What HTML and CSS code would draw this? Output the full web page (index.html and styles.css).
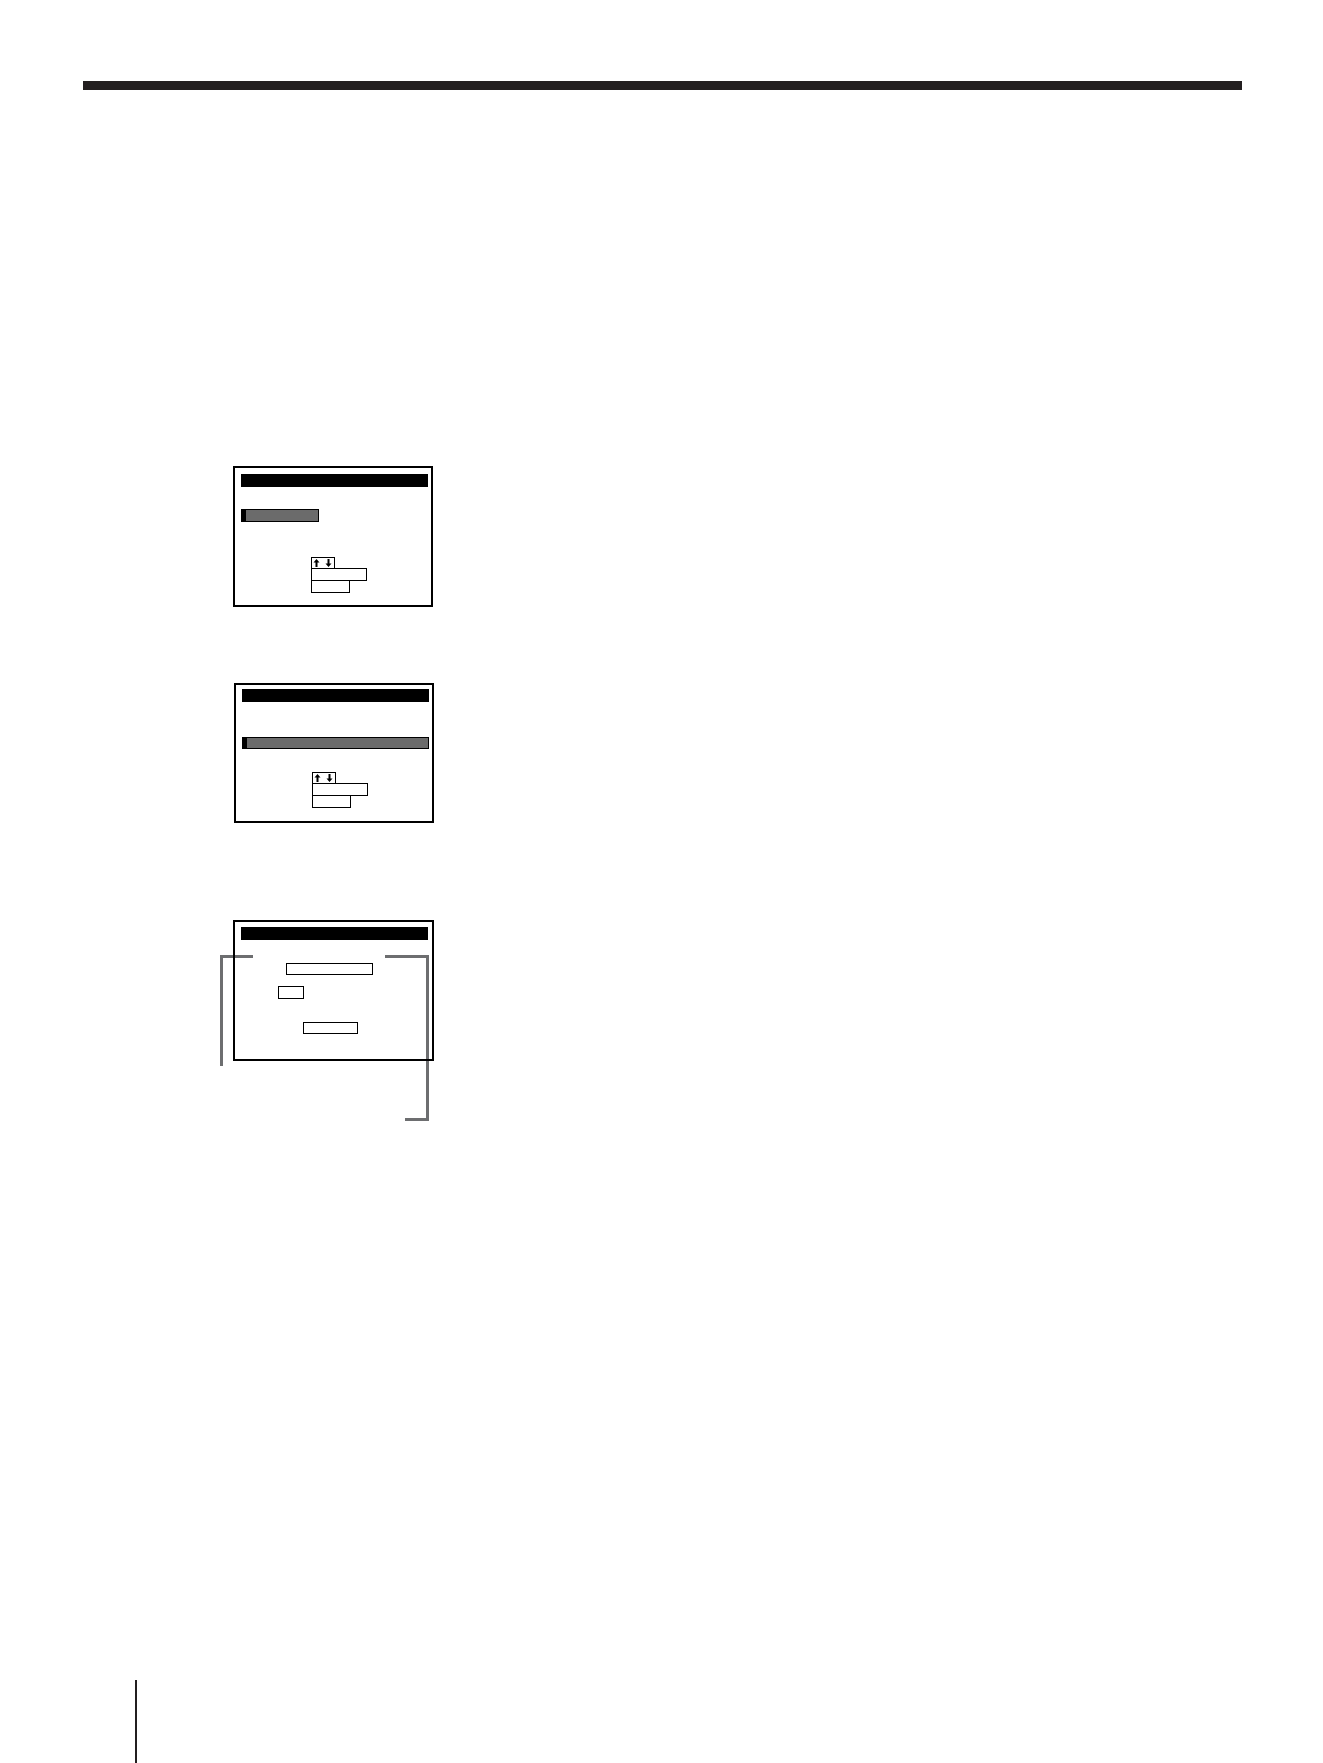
FILE: index.html
```html
<!DOCTYPE html>
<html lang="en">
<head>
<meta charset="utf-8">
<title>Menu screens</title>
<link rel="stylesheet" href="styles.css">
</head>
<body>
<div class="page">
  <div class="rule"></div>

  <div class="screen screen-1">
    <div class="title-bar"></div>
    <div class="sel-bar sel-short"></div>
    <div class="stack stack-1">
      <div class="cell cell-arrows">
        <svg width="22" height="10" viewBox="0 0 22 10" aria-hidden="true">
          <path d="M4.5 1 L7.5 4.5 L5.5 4.5 L5.5 9 L3.5 9 L3.5 4.5 L1.5 4.5 Z" fill="#000"/>
          <path d="M16.5 9 L19.5 5.5 L17.5 5.5 L17.5 1 L15.5 1 L15.5 5.5 L13.5 5.5 Z" fill="#000"/>
        </svg>
      </div>
      <div class="cell cell-wide"></div>
      <div class="cell cell-small"></div>
    </div>
  </div>

  <div class="screen screen-2">
    <div class="title-bar"></div>
    <div class="sel-bar sel-full"></div>
    <div class="stack stack-2">
      <div class="cell cell-arrows">
        <svg width="22" height="10" viewBox="0 0 22 10" aria-hidden="true">
          <path d="M4.5 1 L7.5 4.5 L5.5 4.5 L5.5 9 L3.5 9 L3.5 4.5 L1.5 4.5 Z" fill="#000"/>
          <path d="M16.5 9 L19.5 5.5 L17.5 5.5 L17.5 1 L15.5 1 L15.5 5.5 L13.5 5.5 Z" fill="#000"/>
        </svg>
      </div>
      <div class="cell cell-wide"></div>
      <div class="cell cell-small"></div>
    </div>
  </div>

  <div class="fig-3">
    <div class="bracket bracket-left"></div>
    <div class="bracket bracket-right"></div>
    <div class="screen screen-3">
      <div class="title-bar"></div>
      <div class="field field-a"></div>
      <div class="field field-b"></div>
      <div class="field field-c"></div>
    </div>
  </div>

  <div class="foot-line"></div>
</div>
</body>
</html>
```

FILE: styles.css
```css
* { box-sizing: border-box; }

html, body {
  margin: 0;
  padding: 0;
  background: #fff;
  font-family: "Liberation Sans", Arial, sans-serif;
}

.page {
  width: 1323px;
  height: 1763px;
  overflow: hidden;
  display: flex;
  flex-direction: column;
  align-items: flex-start;
}

.rule {
  margin: 81px 0 0 83px;
  width: 1159px;
  height: 9px;
  background: #231f20;
}

.screen {
  border: 2px solid #000;
  display: flex;
  flex-direction: column;
  align-items: flex-start;
  position: relative;
  z-index: 1;
}

.title-bar {
  width: 187px;
  height: 13px;
  background: #000;
}

.sel-bar {
  border: 1px solid #000;
  border-left: 5px solid #000;
  background: #6b6b6b;
}

.cell {
  border: 1px solid #000;
  background: #fff;
}

.cell + .cell { margin-top: -1px; }

.cell-arrows {
  width: 24px;
  height: 12px;
  display: flex;
}

.cell-wide { width: 56px; height: 13px; }
.cell-small { width: 39px; height: 13px; }

/* Screen 1 */
.screen-1 {
  margin: 376px 0 0 233px;
  width: 200px;
  height: 141px;
  padding: 6px 3px 0 6px;
}

.sel-short {
  margin-top: 22px;
  width: 78px;
  height: 13px;
}

.stack-1 {
  margin: 35px 0 0 70px;
  display: flex;
  flex-direction: column;
  align-items: flex-start;
}

/* Screen 2 */
.screen-2 {
  margin: 76px 0 0 234px;
  width: 200px;
  height: 140px;
  padding: 4px 3px 0 6px;
}

.sel-full {
  margin-top: 35px;
  width: 187px;
  height: 12px;
}

.stack-2 {
  margin: 23px 0 0 70px;
  display: flex;
  flex-direction: column;
  align-items: flex-start;
}

/* Screen 3 with brackets */
.fig-3 {
  position: relative;
  margin: 97px 0 0 220px;
  width: 214px;
  height: 141px;
}

.screen-3 {
  margin-left: 13px;
  width: 201px;
  height: 141px;
  padding: 5px 3px 0 6px;
}

.field {
  border: 1px solid #000;
  background: #fff;
}

.field-a { margin: 23px 0 0 45px; width: 87px; height: 12px; }
.field-b { margin: 11px 0 0 37px; width: 26px; height: 13px; }
.field-c { margin: 23px 0 0 62px; width: 55px; height: 12px; }

.bracket {
  position: absolute;
  border-color: #6d6e70;
  border-style: solid;
  border-width: 0;
}

.bracket-left {
  left: 0;
  top: 35px;
  width: 33px;
  height: 111px;
  border-top-width: 3px;
  border-left-width: 3px;
}

.bracket-right {
  left: 165px;
  top: 35px;
  width: 44px;
  height: 166px;
  border-top-width: 3px;
  border-right-width: 3px;
}

.bracket-right::after {
  content: "";
  position: absolute;
  right: 0;
  bottom: 0;
  width: 21px;
  height: 3px;
  background: #6d6e70;
}

.foot-line {
  margin: 619px 0 0 135px;
  width: 2px;
  height: 83px;
  background: #231f20;
}
```
